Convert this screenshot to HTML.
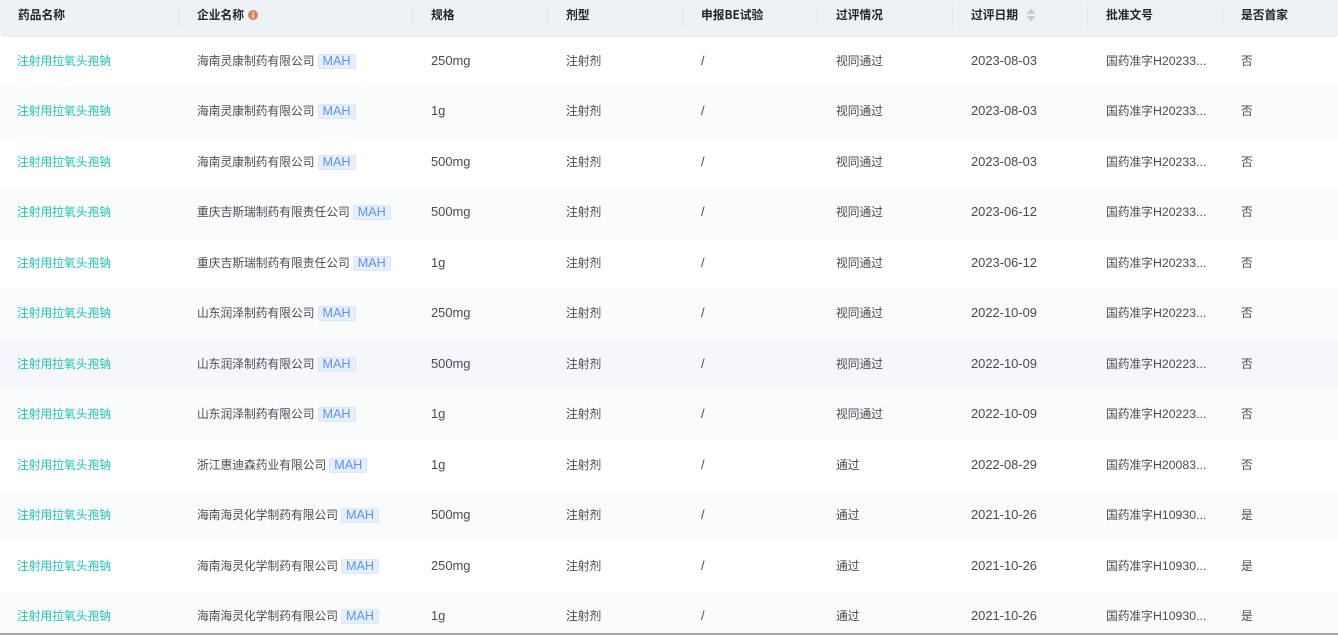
<!DOCTYPE html>
<html lang="zh"><head><meta charset="utf-8">
<style>
html,body{margin:0;padding:0;width:1338px;height:635px;overflow:hidden;background:#fff}
body{position:relative;font-family:"Liberation Sans","Noto Sans CJK SC",sans-serif;font-size:12px;color:#4a4a55}
.h{position:absolute;left:0;top:0;width:1338px;height:37px;background:#eef2f4;border-bottom:1px solid #e6ecf2;box-sizing:border-box;border-radius:0 0 4px 4px}
.h span{position:absolute;top:5px;line-height:20px;font-weight:700;color:#1f2329;font-size:11.75px;white-space:nowrap;font-family:"Noto Sans CJK SC",sans-serif}
.h i{position:absolute;top:5px;width:1px;height:21px;background:#dde9e9}
.r{position:absolute;left:0;width:1338px}
.w{position:absolute;left:0;width:1338px;height:20px}
.c{position:absolute;top:1px;line-height:20px;white-space:nowrap;font-family:"Noto Sans CJK SC",sans-serif;font-size:11.75px}
.l{font-family:"Liberation Sans","Noto Sans CJK SC",sans-serif;font-size:12.9px}
.n{font-family:"Liberation Sans",sans-serif;font-size:12.3px}
.g{color:#20c3b2}
.t{display:inline-block;vertical-align:top;margin:3px 0 0 3px;height:13px;line-height:13px;padding:0 4px;border:1px solid #d9e6fb;background:#e6effd;color:#5a94f5;border-radius:2px;font-family:"Liberation Sans",sans-serif;font-size:12.6px}
.bot{position:absolute;left:0;top:633px;width:1338px;height:2px;background:#a9a9a9}
</style></head><body>
<div class="r" style="top:87px;height:50px;background:#fafbfb"></div>
<div class="r" style="top:188px;height:50px;background:#fafbfb"></div>
<div class="r" style="top:289px;height:50px;background:#fafbfb"></div>
<div class="r" style="top:339px;height:51px;background:#f5f7fb"></div>
<div class="r" style="top:390px;height:50px;background:#fafbfb"></div>
<div class="r" style="top:491px;height:50px;background:#fafbfb"></div>
<div class="r" style="top:592px;height:41px;background:#fafbfb"></div>

<div class="h">
<span style="left:18px">药品名称</span><i style="left:178px"></i>
<span style="left:197px">企业名称</span>
<svg style="position:absolute;left:248px;top:10px" width="10" height="10" viewBox="0 0 10 10"><circle cx="5" cy="5" r="5" fill="#d9825f"/><rect x="4.4" y="1.8" width="1.3" height="1.3" fill="#fff"/><rect x="4.4" y="3.9" width="1.3" height="4.2" fill="#fff"/></svg>
<i style="left:412px"></i>
<span style="left:431px">规格</span><i style="left:547px"></i>
<span style="left:566px">剂型</span><i style="left:682px"></i>
<span style="left:701px">申报BE试验</span><i style="left:817px"></i>
<span style="left:836px">过评情况</span><i style="left:952px"></i>
<span style="left:971px">过评日期</span>
<svg style="position:absolute;left:1026px;top:8px" width="10" height="14" viewBox="0 0 10 14"><path d="M5 0.5L9.5 6H0.5Z M0.5 8H9.5L5 13.5Z" fill="#c6cbd1"/></svg>
<i style="left:1087px"></i>
<span style="left:1106px">批准文号</span><i style="left:1222px"></i>
<span style="left:1241px">是否首家</span>
</div>

<div style="position:absolute;left:0;top:0;width:1338px;height:633px;overflow:hidden">
<div class="w" style="top:50px"><div class="c g" style="left:17px">注射用拉氧头孢钠</div><div class="c" style="left:197px">海南灵康制药有限公司<span class="t">MAH</span></div><div class="c l" style="left:431px">250mg</div><div class="c" style="left:566px">注射剂</div><div class="c l" style="left:701px">/</div><div class="c" style="left:836px">视同通过</div><div class="c l" style="left:971px">2023-08-03</div><div class="c" style="left:1106px">国药准字<span class="n">H20233...</span></div><div class="c" style="left:1241px">否</div></div>
<div class="w" style="top:100px"><div class="c g" style="left:17px">注射用拉氧头孢钠</div><div class="c" style="left:197px">海南灵康制药有限公司<span class="t">MAH</span></div><div class="c l" style="left:431px">1g</div><div class="c" style="left:566px">注射剂</div><div class="c l" style="left:701px">/</div><div class="c" style="left:836px">视同通过</div><div class="c l" style="left:971px">2023-08-03</div><div class="c" style="left:1106px">国药准字<span class="n">H20233...</span></div><div class="c" style="left:1241px">否</div></div>
<div class="w" style="top:151px"><div class="c g" style="left:17px">注射用拉氧头孢钠</div><div class="c" style="left:197px">海南灵康制药有限公司<span class="t">MAH</span></div><div class="c l" style="left:431px">500mg</div><div class="c" style="left:566px">注射剂</div><div class="c l" style="left:701px">/</div><div class="c" style="left:836px">视同通过</div><div class="c l" style="left:971px">2023-08-03</div><div class="c" style="left:1106px">国药准字<span class="n">H20233...</span></div><div class="c" style="left:1241px">否</div></div>
<div class="w" style="top:201px"><div class="c g" style="left:17px">注射用拉氧头孢钠</div><div class="c" style="left:197px">重庆吉斯瑞制药有限责任公司<span class="t">MAH</span></div><div class="c l" style="left:431px">500mg</div><div class="c" style="left:566px">注射剂</div><div class="c l" style="left:701px">/</div><div class="c" style="left:836px">视同通过</div><div class="c l" style="left:971px">2023-06-12</div><div class="c" style="left:1106px">国药准字<span class="n">H20233...</span></div><div class="c" style="left:1241px">否</div></div>
<div class="w" style="top:252px"><div class="c g" style="left:17px">注射用拉氧头孢钠</div><div class="c" style="left:197px">重庆吉斯瑞制药有限责任公司<span class="t">MAH</span></div><div class="c l" style="left:431px">1g</div><div class="c" style="left:566px">注射剂</div><div class="c l" style="left:701px">/</div><div class="c" style="left:836px">视同通过</div><div class="c l" style="left:971px">2023-06-12</div><div class="c" style="left:1106px">国药准字<span class="n">H20233...</span></div><div class="c" style="left:1241px">否</div></div>
<div class="w" style="top:302px"><div class="c g" style="left:17px">注射用拉氧头孢钠</div><div class="c" style="left:197px">山东润泽制药有限公司<span class="t">MAH</span></div><div class="c l" style="left:431px">250mg</div><div class="c" style="left:566px">注射剂</div><div class="c l" style="left:701px">/</div><div class="c" style="left:836px">视同通过</div><div class="c l" style="left:971px">2022-10-09</div><div class="c" style="left:1106px">国药准字<span class="n">H20223...</span></div><div class="c" style="left:1241px">否</div></div>
<div class="w" style="top:353px"><div class="c g" style="left:17px">注射用拉氧头孢钠</div><div class="c" style="left:197px">山东润泽制药有限公司<span class="t">MAH</span></div><div class="c l" style="left:431px">500mg</div><div class="c" style="left:566px">注射剂</div><div class="c l" style="left:701px">/</div><div class="c" style="left:836px">视同通过</div><div class="c l" style="left:971px">2022-10-09</div><div class="c" style="left:1106px">国药准字<span class="n">H20223...</span></div><div class="c" style="left:1241px">否</div></div>
<div class="w" style="top:403px"><div class="c g" style="left:17px">注射用拉氧头孢钠</div><div class="c" style="left:197px">山东润泽制药有限公司<span class="t">MAH</span></div><div class="c l" style="left:431px">1g</div><div class="c" style="left:566px">注射剂</div><div class="c l" style="left:701px">/</div><div class="c" style="left:836px">视同通过</div><div class="c l" style="left:971px">2022-10-09</div><div class="c" style="left:1106px">国药准字<span class="n">H20223...</span></div><div class="c" style="left:1241px">否</div></div>
<div class="w" style="top:454px"><div class="c g" style="left:17px">注射用拉氧头孢钠</div><div class="c" style="left:197px">浙江惠迪森药业有限公司<span class="t">MAH</span></div><div class="c l" style="left:431px">1g</div><div class="c" style="left:566px">注射剂</div><div class="c l" style="left:701px">/</div><div class="c" style="left:836px">通过</div><div class="c l" style="left:971px">2022-08-29</div><div class="c" style="left:1106px">国药准字<span class="n">H20083...</span></div><div class="c" style="left:1241px">否</div></div>
<div class="w" style="top:504px"><div class="c g" style="left:17px">注射用拉氧头孢钠</div><div class="c" style="left:197px">海南海灵化学制药有限公司<span class="t">MAH</span></div><div class="c l" style="left:431px">500mg</div><div class="c" style="left:566px">注射剂</div><div class="c l" style="left:701px">/</div><div class="c" style="left:836px">通过</div><div class="c l" style="left:971px">2021-10-26</div><div class="c" style="left:1106px">国药准字<span class="n">H10930...</span></div><div class="c" style="left:1241px">是</div></div>
<div class="w" style="top:555px"><div class="c g" style="left:17px">注射用拉氧头孢钠</div><div class="c" style="left:197px">海南海灵化学制药有限公司<span class="t">MAH</span></div><div class="c l" style="left:431px">250mg</div><div class="c" style="left:566px">注射剂</div><div class="c l" style="left:701px">/</div><div class="c" style="left:836px">通过</div><div class="c l" style="left:971px">2021-10-26</div><div class="c" style="left:1106px">国药准字<span class="n">H10930...</span></div><div class="c" style="left:1241px">是</div></div>
<div class="w" style="top:605px"><div class="c g" style="left:17px">注射用拉氧头孢钠</div><div class="c" style="left:197px">海南海灵化学制药有限公司<span class="t">MAH</span></div><div class="c l" style="left:431px">1g</div><div class="c" style="left:566px">注射剂</div><div class="c l" style="left:701px">/</div><div class="c" style="left:836px">通过</div><div class="c l" style="left:971px">2021-10-26</div><div class="c" style="left:1106px">国药准字<span class="n">H10930...</span></div><div class="c" style="left:1241px">是</div></div>
</div>
<div class="bot"></div>
</body></html>
